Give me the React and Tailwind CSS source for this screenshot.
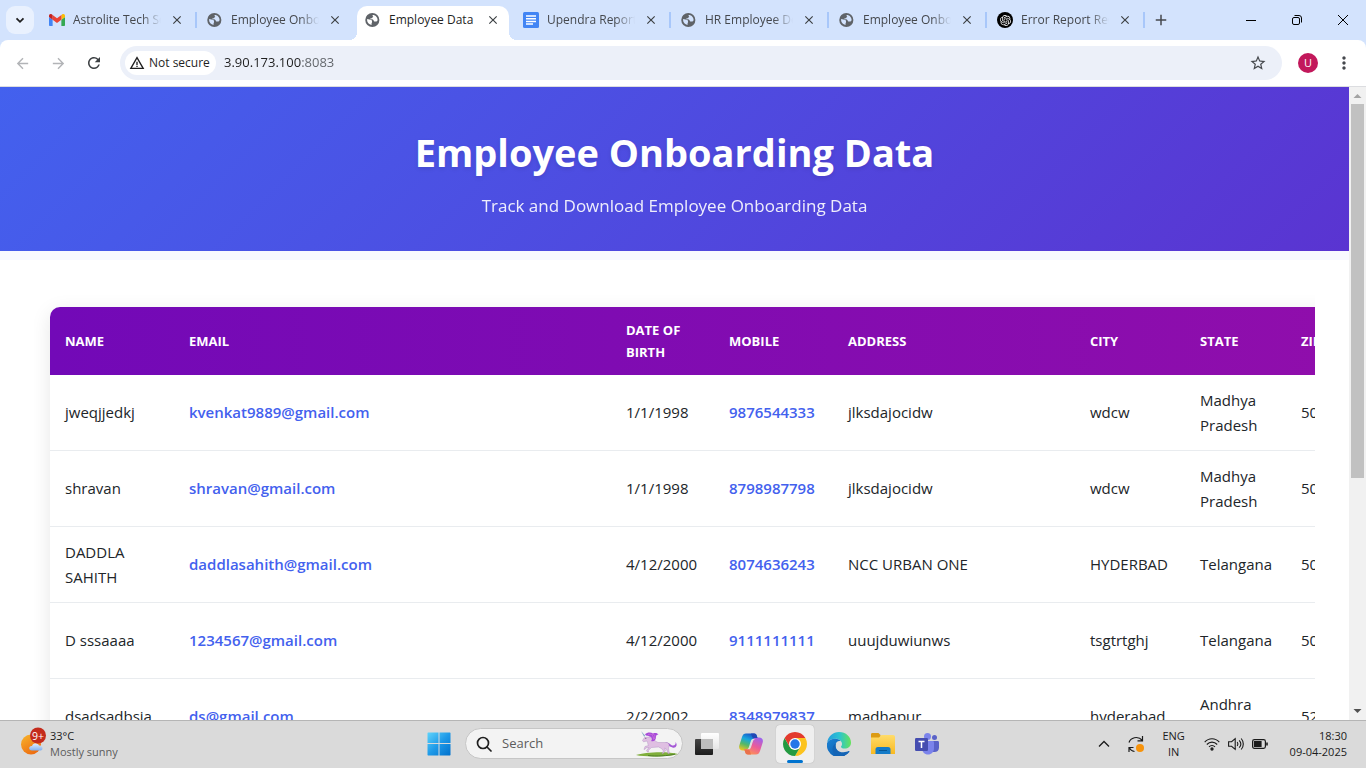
import React from "react";
import { MdRefresh, MdArrowBack, MdArrowForward, MdStarBorder, MdMoreVert, MdClose, MdAdd, MdWarningAmber } from "react-icons/md";
import { SiOpenai } from "react-icons/si";

const tabs = [
  { title: "Astrolite Tech Solutions", icon: "gmail", divider: true },
  { title: "Employee Onboarding", icon: "globe" },
  { title: "Employee Data", icon: "globe", active: true },
  { title: "Upendra Reports", icon: "docs", divider: true },
  { title: "HR Employee Details", icon: "globe", divider: true },
  { title: "Employee Onboarding", icon: "globe", divider: true },
  { title: "Error Report Request", icon: "openai", divider: true },
];

const columns = [
  { label: "Name", width: "w-[124px]" },
  { label: "Email", width: "w-[437px]" },
  { label: "Date of Birth", width: "w-[103px]" },
  { label: "Mobile", width: "w-[119px]" },
  { label: "Address", width: "w-[242px]" },
  { label: "City", width: "w-[110px]" },
  { label: "State", width: "w-[101px]" },
  { label: "ZIP", width: "w-[110px]" },
];

const employees = [
  { name: "jweqjjedkj", email: "kvenkat9889@gmail.com", dob: "1/1/1998", mobile: "9876544333", address: "jlksdajocidw", city: "wdcw", state: "Madhya Pradesh", zip: "500001" },
  { name: "shravan", email: "shravan@gmail.com", dob: "1/1/1998", mobile: "8798987798", address: "jlksdajocidw", city: "wdcw", state: "Madhya Pradesh", zip: "500001" },
  { name: "DADDLA SAHITH", email: "daddlasahith@gmail.com", dob: "4/12/2000", mobile: "8074636243", address: "NCC URBAN ONE", city: "HYDERBAD", state: "Telangana", zip: "500001" },
  { name: "D sssaaaa", email: "1234567@gmail.com", dob: "4/12/2000", mobile: "9111111111", address: "uuujduwiunws", city: "tsgtrtghj", state: "Telangana", zip: "500001" },
  { name: "dsadsadbsja", email: "ds@gmail.com", dob: "2/2/2002", mobile: "8348979837", address: "madhapur", city: "hyderabad", state: "Andhra Pradesh", zip: "520001" },
];

function GmailIcon() {
  return (
    <svg viewBox="52 42 88 66" className="h-3 w-4 shrink-0">
      <path fill="#4285f4" d="M58 108h14V74L52 59v43c0 3.32 2.69 6 6 6" />
      <path fill="#34a853" d="M120 108h14c3.32 0 6-2.69 6-6V59l-20 15" />
      <path fill="#fbbc04" d="M120 48v26l20-15v-8c0-7.42-8.47-11.65-14.4-7.2" />
      <path fill="#ea4335" d="M72 74V48l24 18 24-18v26L96 92" />
      <path fill="#c5221f" d="M52 51v8l20 15V48l-5.600-4.200c-5.940-4.450-14.400-.22-14.400 7.200" />
    </svg>
  );
}

function DocsIcon() {
  return (
    <svg viewBox="0 0 16 16" className="size-4 shrink-0">
      <rect width="16" height="16" rx="1.500" fill="#4285f4" />
      <path d="M3 4h10M3 6.700h10M3 9.400h10M3 12.100h7" stroke="#fff" strokeWidth="1.500" />
    </svg>
  );
}

function GlobeIcon({ land }) {
  return (
    <svg viewBox="0 0 24 24" className="size-4 shrink-0">
      <circle cx="11" cy="12" r="10.600" fill="#5f6368" />
      <path
        className={land}
        d="M9.800 19.500c-3.900-.6-6.700-3.600-6.700-7.400 0-.6.1-1 .2-1.500l4.900 1.200c1.400 0 2.300.8 2.300 2.100v1.300c0 .7-.7 1.300-.7 2zM11 4.800c3.500-1 7.800 2.700 7.900 7.200-.4 1.500-1.600 2.300-2.900 2.300h-1.600c-.8 0-1-1.200-1.600-2.100-.5-.8-1.300-1.200-2.300-1.200H8.200V9.200h2.100c.7 0 .9-.5.9-1.100 0-.8.5-1.100 1.300-1.200z"
      />
    </svg>
  );
}

function Favicon({ kind, active }) {
  if (kind === "gmail") return <GmailIcon />;
  if (kind === "docs") return <DocsIcon />;
  if (kind === "openai")
    return (
      <span className="flex size-4 shrink-0 items-center justify-center rounded-full bg-black text-white">
        <SiOpenai size={11} />
      </span>
    );
  return <GlobeIcon land={active ? "fill-white" : "fill-[#d3e3fd]"} />;
}

function Tab({ tab }) {
  return (
    <div className="flex h-full w-[158px] shrink-0 items-end">
      <div className={`relative flex h-[34px] w-[152px] items-center gap-2 pb-1.5 pl-2 ${tab.active ? "rounded-t-[10px] bg-white" : ""}`}>
        {tab.active && (
          <>
            <span className="absolute bottom-0 -left-2 size-2 bg-[radial-gradient(circle_at_0_0,transparent_8px,white_8px)]" />
            <span className="absolute -right-2 bottom-0 size-2 bg-[radial-gradient(circle_at_100%_0,transparent_8px,white_8px)]" />
          </>
        )}
        <Favicon kind={tab.icon} active={tab.active} />
        <span
          className={`w-[88px] overflow-hidden text-xs whitespace-nowrap ${tab.active ? "text-[#1f1f1f]" : "text-[#45484d] [mask-image:linear-gradient(90deg,black_78%,transparent)]"}`}
        >
          {tab.title}
        </span>
        <button aria-label={`Close ${tab.title}`} className="flex size-4 shrink-0 items-center justify-center text-[#3c4043]">
          <MdClose size={14} className="shrink-0" />
        </button>
      </div>
      {tab.divider && <span className="mb-3 ml-0.5 h-4 w-0.5 bg-[#a8c7fa]" />}
    </div>
  );
}

function TabStrip() {
  return (
    <header className="flex h-10 shrink-0 items-stretch bg-[#d3e3fd]">
      <div className="flex w-[41px] shrink-0 items-center pl-1.5">
        <button aria-label="Search tabs" className="flex size-7 items-center justify-center rounded-[9px] bg-[#e9f1fe]">
          <svg viewBox="0 0 10 10" className="size-2.5" fill="none" stroke="#1f1f1f" strokeWidth="1.800">
            <path d="m1.500 3.300 3.500 3.500 3.500-3.500" />
          </svg>
        </button>
      </div>
      <nav className="flex min-w-0">
        {tabs.map((tab, i) => (
          <Tab key={i} tab={tab} />
        ))}
      </nav>
      <button aria-label="New tab" className="flex w-7 items-center justify-center text-[#45484d]">
        <MdAdd size={18} />
      </button>
      <div className="ml-auto flex">
        <button aria-label="Minimize" className="flex w-[46px] items-center justify-center">
          <svg viewBox="0 0 10 10" className="size-2.5" stroke="#000">
            <path d="M0 5.500h10" />
          </svg>
        </button>
        <button aria-label="Restore" className="flex w-[46px] items-center justify-center">
          <svg viewBox="0 0 10 10" className="size-2.5" fill="none" stroke="#000">
            <rect x=".5" y="2.500" width="7" height="7" rx="1.500" />
            <path d="M2.500.5H7A2.500 2.500 0 0 1 9.500 3v4.500" />
          </svg>
        </button>
        <button aria-label="Close window" className="flex w-[46px] items-center justify-center">
          <svg viewBox="0 0 10 10" className="size-2.5" stroke="#000">
            <path d="m0 0 10 10M10 0 0 10" />
          </svg>
        </button>
      </div>
    </header>
  );
}

function Toolbar() {
  return (
    <div className="shrink-0 bg-[#d3e3fd]">
      <div className="flex h-[47px] items-center rounded-t-lg border-b border-[#dcdde0] bg-white pr-3 pl-3.5">
        <div className="flex gap-5">
          <button aria-label="Back" className="flex size-4 items-center justify-center text-[#b2b4b7]"><MdArrowBack size={17} className="shrink-0" /></button>
          <button aria-label="Forward" className="flex size-4 items-center justify-center text-[#b2b4b7]"><MdArrowForward size={17} className="shrink-0" /></button>
          <button aria-label="Reload" className="flex size-4 items-center justify-center text-[#3c4043]"><MdRefresh size={18} className="shrink-0" /></button>
        </div>
        <div className="ml-[18px] flex h-[34px] flex-1 items-center rounded-full bg-[#ecf0f9] pr-[15px] pl-[5px]">
          <button className="flex h-6 w-[91px] items-center gap-1 rounded-full bg-white pl-1 text-xs font-medium whitespace-nowrap text-[#1f1f1f]">
            <MdWarningAmber size={16} className="shrink-0" />
            Not secure
          </button>
          <input
            aria-label="Address"
            defaultValue="3.90.173.100:8083"
            className="ml-2 min-w-0 flex-1 bg-[linear-gradient(90deg,#1f1f1f_77px,#5f6368_77px)] bg-clip-text text-[13px] text-transparent outline-none"
          />
          <button aria-label="Bookmark this page" className="text-[#45484d]"><MdStarBorder size={18} /></button>
        </div>
        <button aria-label="Profile" className="ml-4 flex size-5 items-center justify-center rounded-full bg-[#c2185b] text-[11px] text-white">U</button>
        <button aria-label="Menu" className="ml-4 text-[#45484d]"><MdMoreVert size={20} /></button>
      </div>
    </div>
  );
}

function EmployeeTable() {
  return (
    <div className="overflow-hidden pt-6 pl-4">
      <table className="w-[1346px] table-fixed border-separate border-spacing-0 rounded-tl-[10px] bg-white text-left shadow-[0_5px_20px_rgba(0,0,0,0.1)]">
        <thead>
          <tr className="h-[68px]">
            {columns.map((c, i) => (
              <th
                key={c.label}
                className={`${c.width} bg-[linear-gradient(90deg,#7209b7,#910eab)] bg-[length:1346px_100%] px-[15px] text-[13px] leading-[22px] font-bold text-white uppercase ${i === 0 ? "rounded-tl-[10px]" : ""}`}
                style={{ backgroundPositionX: [0, -124, -561, -664, -783, -1025, -1135, -1236][i] }}
              >
                {c.label}
              </th>
            ))}
          </tr>
        </thead>
        <tbody className="text-[15px] leading-[25px] text-[#212529] [&_td]:border-b [&_td]:border-[#e9ecef] [&_td]:px-[15px]">
          {employees.map((e) => (
            <tr key={e.email} className="h-[76px]">
              <td>{e.name}</td>
              <td className="font-semibold text-[#4361ee]"><a href={`mailto:${e.email}`}>{e.email}</a></td>
              <td>{e.dob}</td>
              <td className="font-semibold text-[#4361ee]"><a href={`tel:${e.mobile}`}>{e.mobile}</a></td>
              <td>{e.address}</td>
              <td>{e.city}</td>
              <td>{e.state}</td>
              <td>{e.zip}</td>
            </tr>
          ))}
        </tbody>
      </table>
    </div>
  );
}

function Scrollbar() {
  return (
    <div aria-hidden="true" className="flex w-[17px] shrink-0 flex-col items-center bg-[#f1f1f1]">
      <svg viewBox="0 0 17 17" className="size-[17px] shrink-0"><path d="M4.500 11h8l-4-4z" fill="#a3a3a3" /></svg>
      <div className="flex w-full flex-1 flex-col items-center">
        <div className="h-[62.500%] w-[13px] bg-[#c1c1c1]" />
      </div>
      <svg viewBox="0 0 17 17" className="size-[17px] shrink-0"><path d="M4.500 6h8l-4 4z" fill="#505050" /></svg>
    </div>
  );
}

function Page() {
  return (
    <div className="flex min-h-0 flex-1">
      <main className="min-w-0 flex-1 overflow-hidden bg-[#f8f9ff]">
        <div className="flex h-[164px] flex-col items-center bg-[linear-gradient(135deg,#4361ee,#5a34d1)] pt-[39px] text-center text-white">
          <h1 className="text-[38px] leading-[52px] font-bold [text-shadow:0_2px_4px_rgba(0,0,0,0.1)]">Employee Onboarding Data</h1>
          <p className="mt-3.5 text-[17px] leading-7 opacity-90">Track and Download Employee Onboarding Data</p>
        </div>
        <div className="mt-[9px] bg-white px-[34px] pt-[23px]">
          <EmployeeTable />
        </div>
      </main>
      <Scrollbar />
    </div>
  );
}

function WeatherIcon() {
  return (
    <svg viewBox="0 0 27 28" className="h-7 w-[27px] shrink-0">
      <defs>
        <linearGradient id="sun" x1="0" y1="0" x2=".6" y2="1"><stop stopColor="#f8b62c" /><stop offset="1" stopColor="#ed6c10" /></linearGradient>
        <linearGradient id="cloud" x1="0" y1="0" x2="0" y2="1"><stop stopColor="#e4effd" /><stop offset="1" stopColor="#82b0ee" /></linearGradient>
      </defs>
      <circle cx="11" cy="17.500" r="10" fill="url(#sun)" />
      <path d="M12 23.500c-4 0-3.500-5 0-4.500 1-4 6-3.500 7-.5 3.500-1 5 4.500 1.500 5z" fill="url(#cloud)" />
      <circle cx="18" cy="8.500" r="8" fill="#c42b1c" />
      <text x="18" y="12.500" textAnchor="middle" fontSize="10.500" fill="#fff">9+</text>
    </svg>
  );
}

function WindowsIcon() {
  return (
    <svg viewBox="0 0 24 24" className="size-6">
      <defs><linearGradient id="win" x1="0" y1="0" x2="1" y2="1"><stop stopColor="#5fd4fb" /><stop offset=".5" stopColor="#1f9ae8" /><stop offset="1" stopColor="#0070cc" /></linearGradient></defs>
      <path d="M1 .5h10.500V11H.5V1zM12.500.5H23l.5.5v10h-11zM.5 12h11v11.500H1l-.5-.5zM12.500 12h11v11l-.5.5H12.500z" fill="url(#win)" />
    </svg>
  );
}

function UnicornIcon() {
  return (
    <svg viewBox="0 0 42 26" className="h-[26px] w-[42px] shrink-0">
      <path d="M0 24c8-3 32-4 42-1-6 2.500-32 3.500-42 1z" fill="#7fae3b" />
      <path d="M12 24.500c8 1 20 .5 27-1.500" stroke="#4f7f28" fill="none" />
      <path d="M29 12c4-2 5 2.500 8 2.500 2 0 3-1.500 2.500-3.500 2.500 3 .5 6.500-3 5.500-3.500-1-3.500-2.500-6-2.500z" fill="#a458d6" />
      <path d="M8.500 6.500 6.500 9.500l1 1.300 3.500-.8c1 2 .5 3 1.500 4.500L9 15.500 8 18.500l1.200-.4.8-1.300 3-.3-2.500 3 1 1.500h1l-.3-1.500 3.300-3 7-.5 3 1.500 2 2.500-1.500 2.500H27l2.500-2.700-.8-2.800 1.800 1 1.500 4.500h1.300l-.8-5.500c1.500-3 .5-5.500-2.500-5.500h-8c-3-1-4-4-8-5.500z" fill="#dfbfe2" stroke="#a985bd" strokeWidth=".4" />
      <path d="m5 0 4.300 4.800-1.200 1z" fill="#86a9c9" />
      <path d="M9 3.500c2-2.500 6-2.500 8-1 3-1 4.500 0 5.500 1-2 0-2.500 1-2.500 2.500 0 3.500-2.500 5-5 4 1.500-1.500 1-4-1.500-4.500-1-1-3 0-4.500-2z" fill="#a64bd8" />
      <path d="M12 3.500c4-1 5.500 1 5.500 5M16 3c2.500 0 3.500 1 2.500 5" stroke="#d478df" fill="none" strokeWidth=".7" />
      <circle cx="9.800" cy="7.300" r=".5" fill="#4b2e63" />
    </svg>
  );
}

function TaskViewIcon() {
  return (
    <svg viewBox="0 0 24 24" className="size-6">
      <defs>
        <linearGradient id="tvd" x1="0" y1="0" x2="0" y2="1"><stop stopColor="#454545" /><stop offset="1" stopColor="#1c1c1c" /></linearGradient>
        <linearGradient id="tvl" x1="0" y1="0" x2="0" y2="1"><stop stopColor="#fff" /><stop offset="1" stopColor="#e6e6e6" /></linearGradient>
      </defs>
      <rect y="7" width="18" height="16" rx="1" fill="url(#tvd)" />
      <rect x="6" y="1" width="18" height="16" rx="1" fill="url(#tvl)" />
      <path d="M6 7h12v10H6z" fill="#bdbdbd" />
    </svg>
  );
}

function CopilotIcon() {
  return (
    <svg viewBox="0 0 24 24" className="size-6">
      <defs>
        <linearGradient id="cpa" x1=".6" y1="0" x2=".2" y2="1"><stop stopColor="#1956c9" /><stop offset=".35" stopColor="#17a8dd" /><stop offset=".65" stopColor="#55b867" /><stop offset="1" stopColor="#f2c51f" /></linearGradient>
        <linearGradient id="cpb" x1=".8" y1="0" x2=".3" y2="1"><stop stopColor="#9a63f0" /><stop offset=".5" stopColor="#ea5b9b" /><stop offset="1" stopColor="#ff9553" /></linearGradient>
      </defs>
      <path d="M15 1.500c2 0 2.500 1 3 3l.8 2.500H15c-1.500 0-2 1-2.500 2.500L10 16.500c-.5 1.500-1.300 2-2.800 2H4c-3 0-4.500-2-3.700-5L3 5c.8-2.500 2-3.500 4-3.500z" fill="url(#cpa)" />
      <path d="M9 22.500c-2 0-2.500-1-3-3L5.300 17H9c1.500 0 2-1 2.500-2.500L14 7.500C14.600 6 15.500 5.500 17 5.500h3c3 0 4.500 2 3.700 5L21 19c-.8 2.500-2 3.500-4 3.500z" fill="url(#cpb)" />
      <path d="M13.800 7h2.400c-1.500.5-2 1.300-2.500 3l-1.600 5c-.6 1.700-1.300 2.500-3 2.500H7.800c1.300-.5 1.700-1.200 2.200-2.700l1.600-5c.5-1.700 1-2.500 2.200-2.800z" fill="#dedede" />
      <path d="M15 1.500c2 0 2.500 1 3 3L18.500 6h-3.300c-1.200 0-1.800-.4-2.200-1.500L12 1.500z" fill="#2149b5" />
      <path d="M9 22.500c-2 0-2.500-1-3-3L5.300 17.500h3.500c1.200 0 1.800.6 2.200 2l1 3z" fill="#e9714c" />
    </svg>
  );
}

function ChromeIcon() {
  return (
    <svg viewBox="0 0 24 24" className="size-6">
      <path d="M12 6h10.390A12 12 0 0 1 12 24l5.200-9z" fill="#fcc31e" />
      <path d="M1.610 6 6.800 15l5.200 3 5.200-3L12 24A12 12 0 0 1 1.610 6z" fill="#249a41" />
      <path d="M1.610 6A12 12 0 0 1 22.390 6H12L6.800 15z" fill="#e33b2e" />
      <circle cx="12" cy="12" r="6" fill="#fff" />
      <circle cx="12" cy="12" r="4.700" fill="#2377e8" />
    </svg>
  );
}

function EdgeIcon() {
  return (
    <svg viewBox="0 0 24 24" className="size-6">
      <defs>
        <linearGradient id="eda" x1="0" y1=".4" x2="1" y2=".4"><stop stopColor="#259ddd" /><stop offset=".5" stopColor="#2bc3d2" /><stop offset="1" stopColor="#65e35a" /></linearGradient>
        <linearGradient id="edb" x1="0" y1="0" x2="1" y2="1"><stop stopColor="#1b83d5" /><stop offset="1" stopColor="#0c53a6" /></linearGradient>
      </defs>
      <path d="M.2 10.500C1 4.500 6 0 12 0c7 0 12 5 12 10.500 0 4-3 6-6.200 6-2.800 0-3.800-1-3.800-1.800 0-.7 1-.9 1-2.800 0-2.500-2.600-5.100-6.600-5.100-4 0-7 1.500-8.200 3.700z" fill="url(#eda)" />
      <path d="M.1 11C1.500 8 4.500 6.800 8.400 6.800c2.500 0 4.300 1 5.500 2.400-3-.8-5.500 1.300-5.500 4.800 0 5 4.500 7.500 8.600 7.500 2 0 3.500-.6 4.600-1.200A12 12 0 0 1 .1 11z" fill="url(#edb)" />
      <path d="M8.800 11.500c-1.200 5.500 2.800 9 7.700 8.800 2 0 4-.7 5-1.200.8-.4 1.200.2.8.8-2 2.600-5.500 4.100-9.300 4.100-5.500 0-8.500-4.800-7.200-8.800.5-1.600 1.500-3 3-3.700z" fill="#1464b5" />
    </svg>
  );
}

function ExplorerIcon() {
  return (
    <svg viewBox="0 0 24 24" className="size-6">
      <defs><linearGradient id="fol" x1="0" y1="0" x2="0" y2="1"><stop stopColor="#ffdc6b" /><stop offset="1" stopColor="#f9b920" /></linearGradient></defs>
      <path d="M0 2.500c0-1 .5-1.500 1.500-1.500h6l2 2V6H0z" fill="#dc9b13" />
      <path d="M0 5.500h8L10.500 3H22c1.300 0 2 .7 2 2v17H0z" fill="url(#fol)" />
      <path d="M4.500 22v-4.500c0-1.500.7-2.500 2.500-2.500h10c1.800 0 2.500 1 2.500 2.500V22z" fill="#147bc8" />
      <path d="M8 18.500h8" stroke="#075795" />
    </svg>
  );
}

function TeamsIcon() {
  return (
    <svg viewBox="0 0 24 24" className="size-6">
      <circle cx="19.500" cy="5.500" r="2.500" fill="#5a62c8" />
      <circle cx="12.500" cy="4.500" r="3.500" fill="#7b83eb" />
      <path d="M17 9h5.500c1 0 1.500.5 1.500 1.500v5c0 3-2 4.500-4.500 4.500h-3z" fill="#5a62c8" />
      <path d="M8 9h9.500c1 0 1.500.5 1.500 1.500V16c0 4-2.500 6.500-6 6.500S7 20 7 16v-6z" fill="#7b83eb" />
      <rect y="6" width="13" height="13" rx="1.200" fill="#454db0" />
      <path d="M3.500 9.500h6M6.500 9.500v6.500" stroke="#fff" strokeWidth="1.500" />
    </svg>
  );
}

function TaskButton({ label, active, children }) {
  return (
    <button aria-label={label} className="flex h-[46px] w-11 shrink-0 items-center justify-center">
      <span className={`relative flex h-[38px] w-[38px] items-center justify-center rounded ${active ? "bg-[#efefef] shadow-[0_0_1px_rgba(0,0,0,0.3)]" : ""}`}>
        {children}
        {active && <span className="absolute bottom-0 h-[3px] w-4 rounded-full bg-[#0073cf]" />}
      </span>
    </button>
  );
}

function Taskbar() {
  return (
    <footer className="flex h-12 shrink-0 items-center border-t border-[#b5b5b5] bg-[#dadada] pb-0.5 text-[#1b1b1b]">
      <div className="flex flex-1 items-center">
        <button className="flex h-11 items-center gap-[3px] pl-5 text-left text-[11px] leading-4">
          <span className="mb-1.5"><WeatherIcon /></span>
          <span className="flex flex-col whitespace-nowrap">
            <span>33°C</span>
            <span className="text-[#5c5c5c]">Mostly sunny</span>
          </span>
        </button>
      </div>
      <div className="flex items-center">
        <TaskButton label="Start"><WindowsIcon /></TaskButton>
        <label className="mr-0.5 ml-1 flex h-[31px] w-[218px] items-center rounded-full border border-[#c6c6c6] bg-[#f3f3f3] pr-1 pl-2.5">
          <svg viewBox="0 0 16 16" className="size-4 shrink-0" fill="none" stroke="#1f1f1f" strokeWidth="1.700">
            <circle cx="7" cy="7" r="5.500" />
            <path d="m11 11 4 4" strokeLinecap="round" />
          </svg>
          <input aria-label="Search" placeholder="Search" className="ml-2.5 w-0 min-w-0 flex-1 bg-transparent text-[13px] outline-none placeholder:text-[#5c5c5c]" />
          <UnicornIcon />
        </label>
        <TaskButton label="Task view"><TaskViewIcon /></TaskButton>
        <TaskButton label="Copilot"><CopilotIcon /></TaskButton>
        <TaskButton label="Chrome" active><ChromeIcon /></TaskButton>
        <TaskButton label="Edge"><EdgeIcon /></TaskButton>
        <TaskButton label="File Explorer"><ExplorerIcon /></TaskButton>
        <TaskButton label="Teams"><TeamsIcon /></TaskButton>
      </div>
      <div className="flex flex-1 items-center justify-end text-[11px] leading-4">
        <button aria-label="Show hidden icons" className="flex w-8 justify-center">
          <svg viewBox="0 0 12 12" className="size-3" fill="none" stroke="#1b1b1b" strokeWidth="1.300"><path d="m1 8.500 5-5 5 5" /></svg>
        </button>
        <button aria-label="Updates" className="flex w-8 justify-center">
          <svg viewBox="0 0 18 18" className="size-[18px]" fill="none" stroke="#1b1b1b" strokeWidth="1.200">
            <path d="M2 7.500C3.500 3 10.500 0 15.500 5.500M15.500 1v4.800h-5M6.500 12.500H2v4.500M2 12.500c1 2 3 3.500 5.500 4" />
            <circle cx="13" cy="13" r="4" fill="#f7930b" stroke="none" />
          </svg>
        </button>
        <button className="w-11 text-center">ENG<br />IN</button>
        <button aria-label="Network, volume and battery" className="ml-2 flex items-center gap-2">
          <svg viewBox="0 0 16 16" className="size-4" fill="none" stroke="#1b1b1b" strokeWidth="1.100">
            <path d="M.7 6.200c4-4.600 10.600-4.600 14.600 0M2.800 8.500c3-3.200 7.400-3.200 10.400 0M5 10.800c1.700-1.800 4.300-1.800 6 0" />
            <circle cx="8" cy="13" r="1.100" fill="#1b1b1b" />
          </svg>
          <svg viewBox="0 0 16 16" className="size-4" fill="none" stroke="#1b1b1b" strokeWidth="1.100">
            <path d="M.6 5.700h3l3.600-3v10.600l-3.600-3h-3zM9.200 6c.9 1.200.9 2.800 0 4M11.200 4.300c2 2.200 2 5.200 0 7.400M13.200 2.500c2.800 3.200 2.800 7.800 0 11" />
          </svg>
          <svg viewBox="0 0 16 16" className="size-4" fill="none" stroke="#1b1b1b" strokeWidth="1.200">
            <rect x=".6" y="3.600" width="12.800" height="8.800" rx="1.800" />
            <path d="M2.500 5.500H9v5H2.500z" fill="#1b1b1b" />
            <path d="M15 6.500v3" strokeWidth="1.600" />
          </svg>
        </button>
        <button className="pr-[19px] pl-[22px] text-right whitespace-nowrap">18:30<br />09-04-2025</button>
      </div>
    </footer>
  );
}

export default function App() {
  return (
    <div className="flex h-screen flex-col overflow-hidden bg-white font-['Open_Sans','Noto_Sans',sans-serif]">
      <TabStrip />
      <Toolbar />
      <Page />
      <Taskbar />
    </div>
  );
}
